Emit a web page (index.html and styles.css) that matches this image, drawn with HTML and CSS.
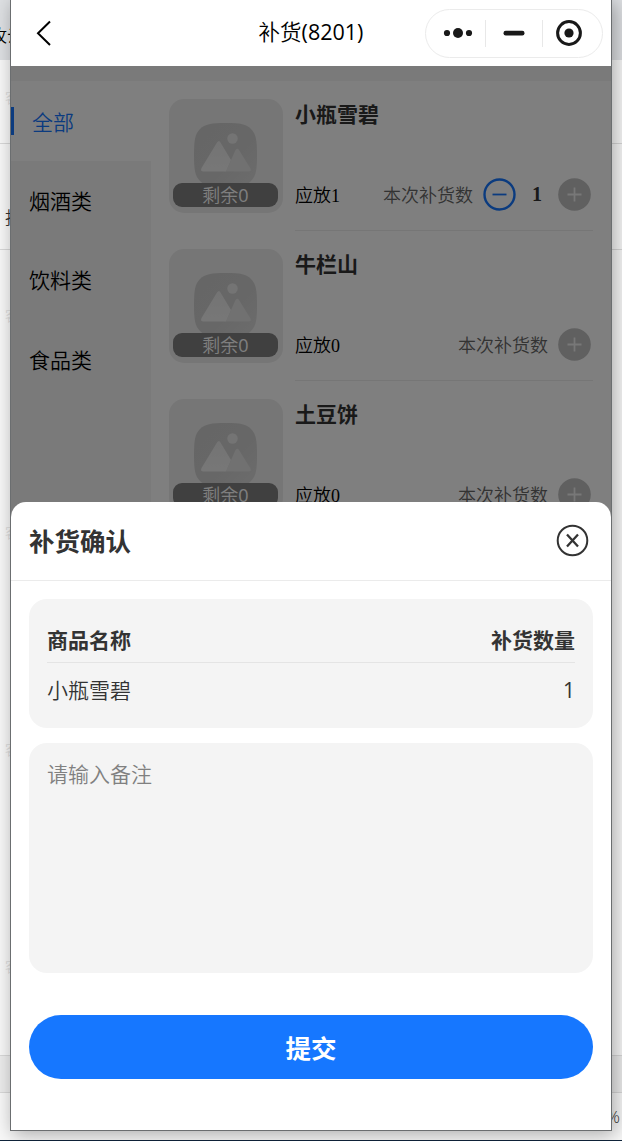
FILE: index.html
```
<!DOCTYPE html>
<html lang="zh-CN">
  <head>
    <meta charset="UTF-8" />
    <meta name="viewport" content="width=device-width, initial-scale=1.0" />
    <title>补货(8201)</title>
    <link rel="stylesheet" href="styles.css">
  </head>

  <body>
    <svg class="defs" width="0" height="0">
      <defs>
        <linearGradient id="tile" x1="0" y1="0" x2="1" y2="1">
          <stop offset="0" stop-color="#cccccc" />
          <stop offset="0.6" stop-color="#cfcfcf" />
          <stop offset="1" stop-color="#dadada" />
        </linearGradient>
        <linearGradient id="hill" x1="0" y1="0" x2="0" y2="1">
          <stop offset="0" stop-color="#e8e8e8" />
          <stop offset="1" stop-color="#efefef" />
        </linearGradient>
      </defs>
      <symbol id="picture" viewBox="0 0 66 66">
        <path d="M33 1C48 1 53 2 58 7C63 12 64 18 64 33C64 48 63 54 58 59C53 64 48 65 33 65C18 65 12 64 7 59C2 54 1 48 1 33C1 18 2 12 7 7C12 2 18 1 33 1Z" fill="url(#tile)" />
        <circle cx="39.500" cy="16.500" r="5.200" fill="#e8e8e8" />
        <path d="M46 28L57.500 46.500Q59 49.500 55.500 49.500H33L42 29Q44 25 46 28Z" fill="#e2e2e2" />
        <path d="M27.500 20.500L38 38L33 49.500H10.500Q7 49.500 8.500 46L24 20.500Q26 17.500 27.500 20.500Z" fill="url(#hill)" />
      </symbol>
      <symbol id="plus" viewBox="0 0 33 33">
        <circle cx="16.500" cy="16.500" r="16.300" fill="#c0c0c0" />
        <path d="M9.500 16.500H23.500M16.500 9.500V23.500" stroke="#f0f0f0" stroke-width="1.800" />
      </symbol>
      <symbol id="minus" viewBox="0 0 33 33">
        <circle cx="16.500" cy="16.500" r="15" fill="none" stroke="#1677ff" stroke-width="2.400" />
        <path d="M9.500 16.500H23.500" stroke="#1677ff" stroke-width="1.800" />
      </symbol>
    </svg>

    <!-- desktop behind the simulator -->
    <div class="desk">
      <div class="desk-tabs"><span class="desk-tab">攻云</span></div>
      <div class="desk-row row-a"><span class="mark">客</span></div>
      <div class="desk-row row-b"><span class="desk-text">报</span></div>
      <div class="desk-row row-c">
        <span class="mark">客</span>
        <span class="mark">客</span>
        <span class="mark">客</span>
        <span class="mark">客</span>
      </div>
      <div class="desk-row row-d"></div>
      <div class="desk-row row-e"><span class="zoom">%</span></div>
    </div>

    <div class="phone">
      <header class="nav">
        <svg class="back" width="16" height="26" viewBox="0 0 16 26">
          <path d="M14 1.500L2 13.300L14 25" fill="none" stroke="#000" stroke-width="2" />
        </svg>
        <h1 class="nav-title">补货<span class="digit">(8201)</span></h1>
        <div class="capsule">
          <div class="capsule-btn">
            <svg width="30" height="12" viewBox="0 0 30 12">
              <circle cx="4" cy="6" r="3.100" />
              <circle cx="15" cy="6" r="5" />
              <circle cx="26" cy="6" r="3.100" />
            </svg>
          </div>
          <div class="capsule-btn">
            <svg width="22" height="6" viewBox="0 0 22 6">
              <rect x="0.500" y="0.700" width="21" height="4.800" rx="2.200" />
            </svg>
          </div>
          <div class="capsule-btn">
            <svg width="28" height="28" viewBox="0 0 28 28">
              <circle cx="13" cy="14" r="11.400" fill="none" stroke="#191919" stroke-width="3" />
              <circle cx="13" cy="14" r="4.600" />
            </svg>
          </div>
        </div>
      </header>

      <main class="page">
        <nav class="side">
          <div class="side-item active">全部</div>
          <div class="side-item">烟酒类</div>
          <div class="side-item">饮料类</div>
          <div class="side-item">食品类</div>
        </nav>
        <div class="list">
          <div class="goods">
            <div class="thumb">
              <svg class="thumb-img"><use href="#picture" /></svg>
              <div class="left-num">剩余<span class="digit">0</span></div>
            </div>
            <div class="info">
              <div class="name">小瓶雪碧</div>
              <div class="line">
                <span class="should">应放<span class="num">1</span></span>
                <span class="label">本次补货数</span>
                <svg class="step"><use href="#minus" /></svg>
                <span class="count">1</span>
                <svg class="step"><use href="#plus" /></svg>
              </div>
            </div>
          </div>
          <div class="goods">
            <div class="thumb">
              <svg class="thumb-img"><use href="#picture" /></svg>
              <div class="left-num">剩余<span class="digit">0</span></div>
            </div>
            <div class="info">
              <div class="name">牛栏山</div>
              <div class="line">
                <span class="should">应放<span class="num">0</span></span>
                <span class="label">本次补货数</span>
                <svg class="step"><use href="#plus" /></svg>
              </div>
            </div>
          </div>
          <div class="goods">
            <div class="thumb">
              <svg class="thumb-img"><use href="#picture" /></svg>
              <div class="left-num">剩余<span class="digit">0</span></div>
            </div>
            <div class="info">
              <div class="name">土豆饼</div>
              <div class="line">
                <span class="should">应放<span class="num">0</span></span>
                <span class="label">本次补货数</span>
                <svg class="step"><use href="#plus" /></svg>
              </div>
            </div>
          </div>
        </div>
      </main>

      <div class="mask">
        <section class="sheet">
          <div class="sheet-head">
            <h2>补货确认</h2>
            <svg width="34" height="34" viewBox="0 0 34 34" fill="none" stroke="#333">
              <circle cx="17.500" cy="16.500" r="14.800" stroke-width="2" />
              <path d="M12 10.500L23 22.500M23 10.500L12 22.500" stroke-width="2.300" />
            </svg>
          </div>
          <div class="sheet-body">
            <div class="table">
              <div class="tr th"><span>商品名称</span><span>补货数量</span></div>
              <div class="tr"><span>小瓶雪碧</span><span class="digit">1</span></div>
            </div>
            <textarea class="remark" placeholder="请输入备注"></textarea>
            <button class="submit">提交</button>
          </div>
        </section>
      </div>
    </div>
  </body>
</html>
```
FILE: styles.css
```
* {
  box-sizing: border-box;
}
body {
  position: relative;
  margin: 0;
  height: 1141px;
  overflow: hidden;
  font-family: "Open Sans", "Noto Sans CJK SC", sans-serif;
  font-weight: 350;
  font-size: 21px;
  color: #000;
}
svg {
  flex: none;
}
.defs {
  position: absolute;
}
.digit {
  font-weight: 400;
}

/* desktop */
.desk {
  display: flex;
  flex-direction: column;
  height: 1141px;
  background: #f8f8f8;
  border-bottom: 1px solid #10253c;
}
.desk-tabs {
  height: 60px;
  padding-top: 24px;
  background: #dee0e3;
  font-size: 17px;
  line-height: 24px;
}
.desk-tab {
  margin-left: -10px;
}
.desk-row {
  border-bottom: 1px solid #d8d8d8;
}
.row-a {
  height: 84px;
  padding-top: 26px;
}
.row-b {
  height: 106px;
  padding: 62px 0 0 5px;
}
.row-c {
  display: flex;
  flex-direction: column;
  gap: 193px;
  height: 806px;
  padding-top: 54px;
}
.row-d {
  height: 37px;
  background: #ececec;
}
.row-e {
  flex: 1;
  padding: 12px 2px 0 0;
  border-bottom: none;
  text-align: right;
}
.mark {
  display: block;
  height: 24px;
  margin-left: 5px;
  font-size: 14px;
  line-height: 24px;
  color: #ddd;
}
.desk-text,
.zoom {
  display: block;
  font-size: 17px;
  line-height: 24px;
  color: #333;
}

/* simulator window */
.phone {
  position: absolute;
  top: -1px;
  left: 10px;
  width: 602px;
  height: 1132px;
  background: #fff;
  border: 1px solid #6b6e70;
  box-shadow: 3px 3px 18px rgba(0, 0, 0, 0.33);
}
.nav {
  display: grid;
  grid-template-columns: 1fr auto 1fr;
  align-items: center;
  height: 66px;
  padding: 0 8px 0 25px;
}
.nav-title {
  margin: -2px 0 0 -17px;
  font-size: 21.5px;
  line-height: 30px;
  font-weight: 350;
}
.capsule {
  display: flex;
  align-items: center;
  justify-self: end;
  width: 178px;
  height: 49px;
  border: 1px solid #ebebeb;
  border-radius: 25px;
  padding: 0 4px;
}
.capsule-btn {
  flex: 1;
  display: flex;
  align-items: center;
  justify-content: center;
  height: 27px;
  fill: #191919;
}
.capsule-btn + .capsule-btn {
  border-left: 1px solid #e8e8e8;
}
.page {
  display: flex;
  height: 1064px;
  padding-top: 15px;
  background: #f5f5f5;
}
.side {
  width: 140px;
}
.side-item {
  display: flex;
  align-items: center;
  height: 79.5px;
  padding: 0 0 2px 18px;
}
.side-item.active {
  position: relative;
  height: 80px;
  padding: 0 0 1px 21px;
  background: #fff;
  color: #1677ff;
}
.side-item.active::before {
  content: "";
  position: absolute;
  left: 0;
  top: 26px;
  width: 3px;
  height: 28px;
  background: #1677ff;
}
.list {
  flex: 1;
  padding: 18px 18px 0;
  background: #fff;
}
.goods {
  display: flex;
  gap: 12px;
  height: 150px;
}
.thumb {
  display: flex;
  flex-direction: column;
  align-items: center;
  width: 114px;
  height: 114px;
  padding: 23px 1px 0 0;
  border-radius: 15px;
  background: #ededed;
}
.thumb-img {
  width: 66px;
  height: 66px;
}
.left-num {
  position: relative;
  width: 105px;
  height: 24px;
  margin-top: -5px;
  border-radius: 9px;
  background: #808080;
  color: #fff;
  font-size: 18px;
  line-height: 24px;
  text-align: center;
}
.info {
  flex: 1;
  height: 132px;
  border-bottom: 1px solid #ededed;
}
.name {
  height: 30px;
  font-weight: 700;
  line-height: 30px;
  color: #333;
}
.line {
  display: flex;
  align-items: center;
  height: 33px;
  margin-top: 49px;
  padding-right: 2px;
  font-size: 18px;
  line-height: 33px;
}
.should,
.label {
  padding-top: 2px;
}
.num,
.count {
  font-family: "Liberation Serif", serif;
}
.label {
  margin: 0 10px 0 auto;
  color: #666;
}
.step {
  width: 33px;
  height: 33px;
}
.count {
  width: 42px;
  font-size: 20px;
  font-weight: 700;
  color: #333;
  text-align: center;
}

/* confirm sheet */
.mask {
  position: absolute;
  top: 66px;
  left: 0;
  right: 0;
  bottom: 0;
  display: flex;
  align-items: flex-end;
  background: rgba(0, 0, 0, 0.5);
}
.sheet {
  width: 100%;
  height: 628px;
  border-radius: 15px 15px 0 0;
  background: #fff;
  color: #333;
}
.sheet-head {
  display: flex;
  align-items: center;
  justify-content: space-between;
  height: 79px;
  padding: 0 22px 0 18px;
  border-bottom: 1px solid #ebebeb;
}
.sheet-head h2 {
  margin: 0;
  font-size: 25.5px;
  line-height: 36px;
}
.sheet-body {
  display: flex;
  flex-direction: column;
  padding: 18px 18px 0;
}
.table {
  height: 129px;
  padding: 18px 18px 0;
  border-radius: 18px;
  background: #f4f4f4;
}
.tr {
  display: flex;
  justify-content: space-between;
  height: 46px;
  padding-top: 8px;
  line-height: 30px;
}
.tr + .tr {
  padding-top: 12px;
}
.th {
  border-bottom: 1px solid #e4e4e4;
  font-weight: 700;
}
.remark {
  height: 230px;
  margin-top: 15px;
  padding: 16px 18px;
  border: none;
  border-radius: 18px;
  background: #f4f4f4;
  font: inherit;
  line-height: 30px;
  resize: none;
}
.remark::placeholder {
  color: #808080;
}
.submit {
  height: 64px;
  margin-top: 42px;
  padding-bottom: 3px;
  border: none;
  border-radius: 32px;
  background: #1677ff;
  color: #fff;
  font: inherit;
  font-size: 25.5px;
  font-weight: 700;
}
```
